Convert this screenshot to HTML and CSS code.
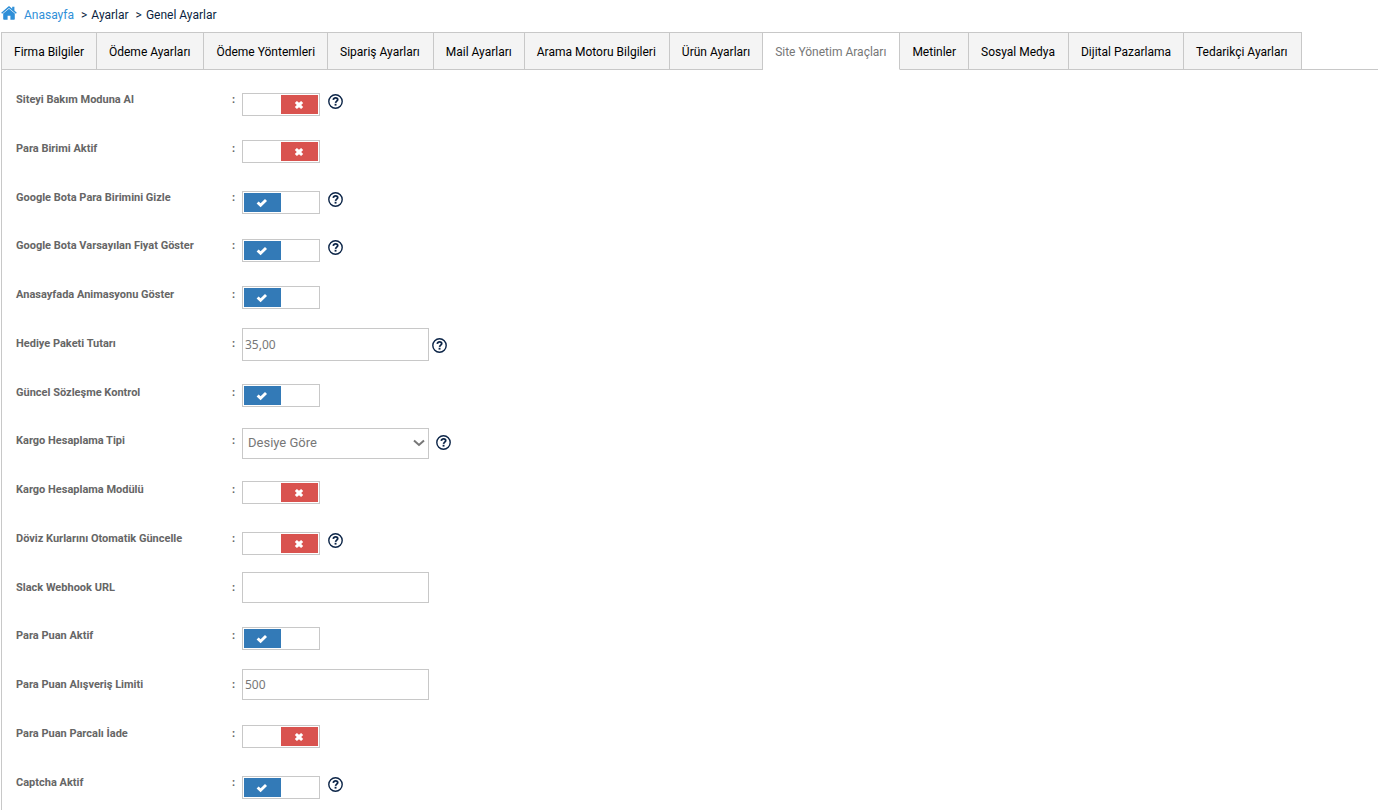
FILE: index.html
```html
<!DOCTYPE html>
<html lang="tr">
<head>
<meta charset="utf-8">
<meta name="viewport" content="width=device-width, initial-scale=1">
<title>Genel Ayarlar</title>
<link rel="stylesheet" href="styles.css">
</head>
<body>
<svg class="sprite" aria-hidden="true">
  <symbol id="check" viewBox="0 0 12 10"><path d="M.6 5.4 2.6 3.4 4.6 5.2 9 1 11 3 4.6 9.2Z"/></symbol>
  <symbol id="cross" viewBox="0 0 10 10"><path d="M.8 3 2.9 1 5 2.8 7.1 1 9.2 3 7.2 5 9.2 7 7.1 9 5 7.2 2.9 9 .8 7 2.8 5Z"/></symbol>
  <symbol id="help" viewBox="0 0 15 15"><circle cx="7.5" cy="7.5" r="6.7" fill="none" stroke="currentColor" stroke-width="1.4"/><path d="M5.3 5.9C5.5 4.5 6.3 3.9 7.6 3.9 8.9 3.9 9.7 4.6 9.7 5.6 9.7 7.2 7.7 7.1 7.6 8.9" fill="none" stroke="currentColor" stroke-width="1.8"/><path d="M6.6 9.8H8.5V11.6H6.6Z" fill="currentColor"/></symbol>
</svg>
<nav class="breadcrumb" aria-label="Konum">
  <a class="home" href="#"><svg class="home-icon" viewBox="0 0 16 14" aria-hidden="true"><path d="M8 2.7 2.2 7.6V13q0 .8.8.8h3.6V9.7h2.8v4.1H13q.8 0 .8-.8V7.6Z"/><path d="M8 .1 .2 6.7 1.1 7.7 8 2 14.9 7.7 15.8 6.7 13.4 4.6V.7H11.2V2.8Z"/></svg>Anasayfa</a>
  <span class="crumb"><span>&gt;</span><span>Ayarlar</span></span>
  <span class="crumb"><span>&gt;</span><span>Genel Ayarlar</span></span>
</nav>
<nav class="tabs" aria-label="Ayar grupları">
  <a class="tab" href="#">Firma Bilgiler</a>
  <a class="tab" href="#">Ödeme Ayarları</a>
  <a class="tab" href="#">Ödeme Yöntemleri</a>
  <a class="tab" href="#">Sipariş Ayarları</a>
  <a class="tab" href="#">Mail Ayarları</a>
  <a class="tab" href="#">Arama Motoru Bilgileri</a>
  <a class="tab" href="#">Ürün Ayarları</a>
  <a class="tab active" href="#" aria-current="page">Site Yönetim Araçları</a>
  <a class="tab" href="#">Metinler</a>
  <a class="tab" href="#">Sosyal Medya</a>
  <a class="tab" href="#">Dijital Pazarlama</a>
  <a class="tab" href="#">Tedarikçi Ayarları</a>
</nav>
<form class="panel">
  <div class="row"><label class="name" for="f1">Siteyi Bakım Moduna Al</label><span class="colon">:</span><span class="switch with-help"><input id="f1" type="checkbox"><span class="knob"><svg class="mark"><use href="#cross"/></svg></span></span><button class="help" type="button" aria-label="Yardım"><svg><use href="#help"/></svg></button></div>
  <div class="row"><label class="name" for="f2">Para Birimi Aktif</label><span class="colon">:</span><span class="switch"><input id="f2" type="checkbox"><span class="knob"><svg class="mark"><use href="#cross"/></svg></span></span></div>
  <div class="row"><label class="name" for="f3">Google Bota Para Birimini Gizle</label><span class="colon">:</span><span class="switch on with-help"><input id="f3" type="checkbox" checked><span class="knob"><svg class="mark"><use href="#check"/></svg></span></span><button class="help" type="button" aria-label="Yardım"><svg><use href="#help"/></svg></button></div>
  <div class="row"><label class="name" for="f4">Google Bota Varsayılan Fiyat Göster</label><span class="colon">:</span><span class="switch on with-help"><input id="f4" type="checkbox" checked><span class="knob"><svg class="mark"><use href="#check"/></svg></span></span><button class="help" type="button" aria-label="Yardım"><svg><use href="#help"/></svg></button></div>
  <div class="row"><label class="name" for="f5">Anasayfada Animasyonu Göster</label><span class="colon">:</span><span class="switch on"><input id="f5" type="checkbox" checked><span class="knob"><svg class="mark"><use href="#check"/></svg></span></span></div>
  <div class="row"><label class="name" for="f6">Hediye Paketi Tutarı</label><span class="colon">:</span><input class="field price" id="f6" type="text" value="35,00"><button class="help near" type="button" aria-label="Yardım"><svg><use href="#help"/></svg></button></div>
  <div class="row"><label class="name" for="f7">Güncel Sözleşme Kontrol</label><span class="colon">:</span><span class="switch on"><input id="f7" type="checkbox" checked><span class="knob"><svg class="mark"><use href="#check"/></svg></span></span></div>
  <div class="row"><label class="name" for="f8">Kargo Hesaplama Tipi</label><span class="colon">:</span><span class="select-wrap"><select class="field select" id="f8"><option>Desiye Göre</option></select><svg class="chevron" viewBox="0 0 12 8" aria-hidden="true"><path d="M1 1.5 6 6 11 1.5"/></svg></span><button class="help" type="button" aria-label="Yardım"><svg><use href="#help"/></svg></button></div>
  <div class="row"><label class="name" for="f9">Kargo Hesaplama Modülü</label><span class="colon">:</span><span class="switch"><input id="f9" type="checkbox"><span class="knob"><svg class="mark"><use href="#cross"/></svg></span></span></div>
  <div class="row"><label class="name" for="f10">Döviz Kurlarını Otomatik Güncelle</label><span class="colon">:</span><span class="switch with-help"><input id="f10" type="checkbox"><span class="knob"><svg class="mark"><use href="#cross"/></svg></span></span><button class="help" type="button" aria-label="Yardım"><svg><use href="#help"/></svg></button></div>
  <div class="row"><label class="name" for="f11">Slack Webhook URL</label><span class="colon">:</span><input class="field" id="f11" type="text"></div>
  <div class="row"><label class="name" for="f12">Para Puan Aktif</label><span class="colon">:</span><span class="switch on"><input id="f12" type="checkbox" checked><span class="knob"><svg class="mark"><use href="#check"/></svg></span></span></div>
  <div class="row"><label class="name" for="f13">Para Puan Alışveriş Limiti</label><span class="colon">:</span><input class="field" id="f13" type="text" value="500"></div>
  <div class="row"><label class="name" for="f14">Para Puan Parcalı İade</label><span class="colon">:</span><span class="switch"><input id="f14" type="checkbox"><span class="knob"><svg class="mark"><use href="#cross"/></svg></span></span></div>
  <div class="row"><label class="name" for="f15">Captcha Aktif</label><span class="colon">:</span><span class="switch on with-help"><input id="f15" type="checkbox" checked><span class="knob"><svg class="mark"><use href="#check"/></svg></span></span><button class="help" type="button" aria-label="Yardım"><svg><use href="#help"/></svg></button></div>
</form>
</body>
</html>
```
FILE: styles.css
```css
* { box-sizing: border-box; }
body {
  margin: 0 0 0 1px;
  background: #fff;
  color: #0b1f3f;
  font: 12px/16px Roboto, sans-serif;
}
.sprite { display: none; }

.breadcrumb { display: flex; gap: 7px; padding: 7px 0 9px; }
.home { display: flex; gap: 7px; color: #2f8fd8; text-decoration: none; }
.home-icon { width: 16px; height: 14px; fill: currentColor; margin-top: -1px; }
.crumb { display: flex; gap: 4px; }

.tabs { display: flex; border-left: 1px solid #c8c8c8; }
.tabs::after { content: ""; flex: 1; border-bottom: 1px solid #c8c8c8; }
.tab {
  padding: 11px 12px 9px 12px;
  border: solid #c8c8c8;
  border-width: 1px 1px 1px 0;
  background: #f4f4f4;
  color: #000;
  white-space: nowrap;
  text-decoration: none;
}
.tab:nth-child(even) { padding-right: 13px; }
.tab.active { background: #fff; border-bottom-color: #fff; color: #777; }

.panel { border-left: 1px solid #c8c8c8; padding: 9px 0 0 14px; }
.row { display: flex; align-items: flex-start; height: 49px; }
.row:nth-child(4n+3) { height: 48px; }
.name, .colon { padding-top: 13px; color: #666; font-weight: 700; font-size: 11px; }
.name { width: 216px; }
.colon { width: 10px; }

.switch {
  position: relative;
  display: flex;
  justify-content: flex-end;
  width: 78px;
  height: 23px;
  margin-top: 12px;
  padding: 1px;
  border: 1px solid #c8c8c8;
}
.switch.with-help { margin-top: 14px; }
.switch.on { justify-content: flex-start; }
.switch input { position: absolute; inset: 0; width: 100%; height: 100%; margin: 0; opacity: 0; }
.knob { display: flex; align-items: center; justify-content: center; width: 37px; padding-right: 1px; background: #d9534f; }
.on .knob { background: #337ab7; }
.mark { width: 10px; height: 10px; fill: #fff; }
.on .mark { width: 12px; }

.field {
  width: 187px;
  height: 31px;
  margin: 5px 0 0;
  padding: 0 2px;
  border: 1px solid #c8c8c8;
  border-radius: 0;
  background: #fff;
  color: #777;
  font: 12px "Noto Sans", sans-serif;
}
.field.price { height: 33px; }
.select-wrap { position: relative; margin-top: 8px; }
.field.select { appearance: none; display: block; margin: 0; padding: 0 5px 2px; font: 13px Roboto, sans-serif; }
.chevron { position: absolute; right: 4px; top: 11px; width: 12px; height: 8px; fill: none; stroke: #777; stroke-width: 2; pointer-events: none; }

.help {
  width: 15px;
  height: 15px;
  margin: 15px 0 0 8px;
  padding: 0;
  border: 0;
  background: none;
  color: #0b2447;
}
.help svg { display: block; width: 15px; height: 15px; }
.help.near { margin-left: 3px; }
.select-wrap + .help { margin-left: 7px; }
```
